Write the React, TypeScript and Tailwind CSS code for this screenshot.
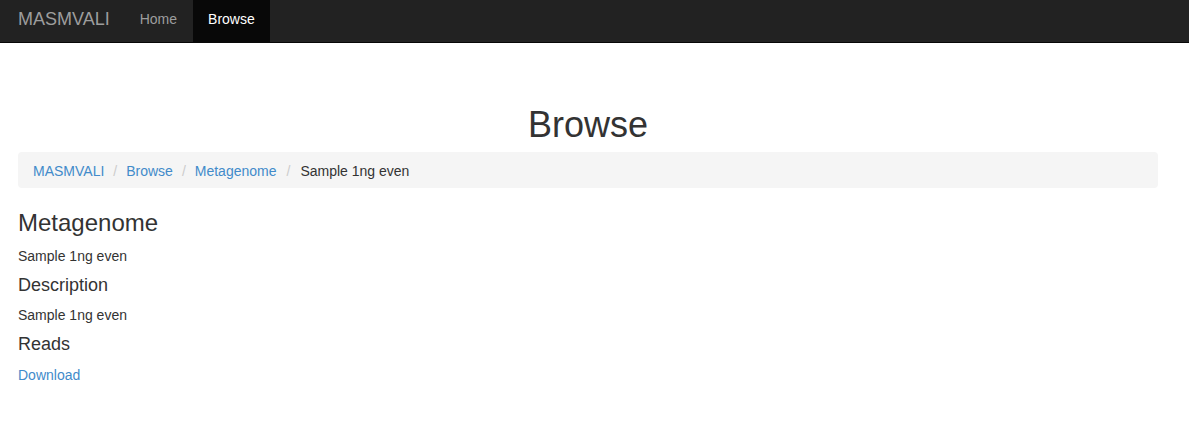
export default function App() {
  return (
    <div className="min-h-[437px] bg-white text-[14px] leading-[20px] text-[#333]" style={{ fontFamily: '"Liberation Sans", Arial, sans-serif' }}>
      <nav className="flex h-[43px] items-stretch border-b border-[#080808] bg-[#222]">
        <div className="flex items-stretch pl-[18px]">
          <a className="flex items-center pr-[15px] pb-[4px] text-[18px] text-[#9d9d9d]">MASMVALI</a>
          <a className="flex items-center pl-[15px] pr-[16px] pb-[4px] text-[#9d9d9d]">Home</a>
          <a className="flex items-center bg-[#080808] px-[15px] pb-[4px] text-white">Browse</a>
        </div>
      </nav>

      <div className="mx-[18px] w-[1140px]">
        <h1 className="mt-[62px] mb-[7px] text-center text-[36px] leading-[40px] font-normal text-[#333]">Browse</h1>

        <ol className="flex rounded-[4px] bg-[#f5f5f5] px-[15px] pt-[9px] pb-[7px]">
          <li className="text-[#428bca]">MASMVALI</li>
          <li className="px-[9px] text-[#ccc]">/</li>
          <li className="text-[#428bca]">Browse</li>
          <li className="px-[9px] text-[#ccc]">/</li>
          <li className="text-[#428bca]">Metagenome</li>
          <li className="px-[10px] text-[#ccc]">/</li>
          <li>Sample 1ng even</li>
        </ol>

        <h3 className="mt-[22px] mb-[10px] text-[24px] leading-[26.4px]">Metagenome</h3>
        <p className="mb-[10px]">Sample 1ng even</p>
        <h4 className="mb-[9px] text-[18px] leading-[19.8px]">Description</h4>
        <p className="mb-[10px]">Sample 1ng even</p>
        <h4 className="mb-[10px] text-[18px] leading-[19.8px]">Reads</h4>
        <p className="mb-[10px]">
          <a className="text-[#428bca]">Download</a>
        </p>
      </div>
    </div>
  );
}
